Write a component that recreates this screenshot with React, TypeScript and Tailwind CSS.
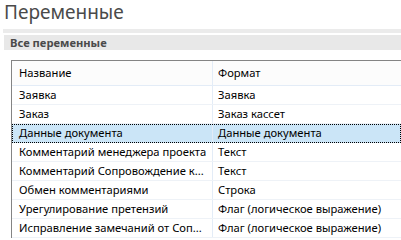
import React from "react";

const rows: [string, string][] = [
  ["Заявка", "Заявка"],
  ["Заказ", "Заказ кассет"],
  ["Данные документа", "Данные документа"],
  ["Комментарий менеджера проекта", "Текст"],
  ["Комментарий Сопровождение к...", "Текст"],
  ["Обмен комментариями", "Строка"],
  ["Урегулирование претензий", "Флаг (логическое выражение)"],
  ["Исправление замечаний от Соп...", "Флаг (логическое выражение)"],
];

export default function App() {
  return (
    <div className="w-[401px] h-[240px] overflow-hidden bg-white font-['Noto_Sans','Open_Sans',sans-serif] text-[11.2px] text-black">
      <div className="h-[29px] pl-[4px] text-[19px] leading-[25px] text-[#4a4a4a]">Переменные</div>
      <div className="ml-[3px] h-[4px] bg-[#ebebeb]" />
      <div className="ml-[4px] mt-[2px] h-[15px] bg-[#e8e8e8] pl-[6px] text-[11.2px] font-bold leading-[15px] text-[#4a4a4a]">
        Все переменные
      </div>

      <div className="ml-[11px] mt-[10px] border-t border-l border-[#848484]">
        <div className="grid h-[25px] grid-cols-[201px_1fr] items-center border-b border-[#e3ecf7] bg-[#fcfcfc]">
          <div className="h-full border-r border-[#e3ecf7] pl-[7px] leading-[24px]">Название</div>
          <div className="pl-[5px]">Формат</div>
        </div>
        {rows.map(([name, format], i) => {
          const selected = i === 2;
          return (
            <div
              key={i}
              className={
                selected
                  ? "grid h-[19px] grid-cols-[201px_1fr] bg-[#cbe5f7] outline-1 outline-dotted outline-offset-[-1px] outline-black"
                  : "grid h-[19px] grid-cols-[201px_1fr] border-b border-[#eef2f7]"
              }
            >
              <div className="h-full overflow-hidden whitespace-nowrap border-r border-[#e3ecf7] pl-[7px] leading-[18px]">{name}</div>
              <div className="pl-[5px] leading-[18px] whitespace-nowrap">{format}</div>
            </div>
          );
        })}
      </div>
    </div>
  );
}
